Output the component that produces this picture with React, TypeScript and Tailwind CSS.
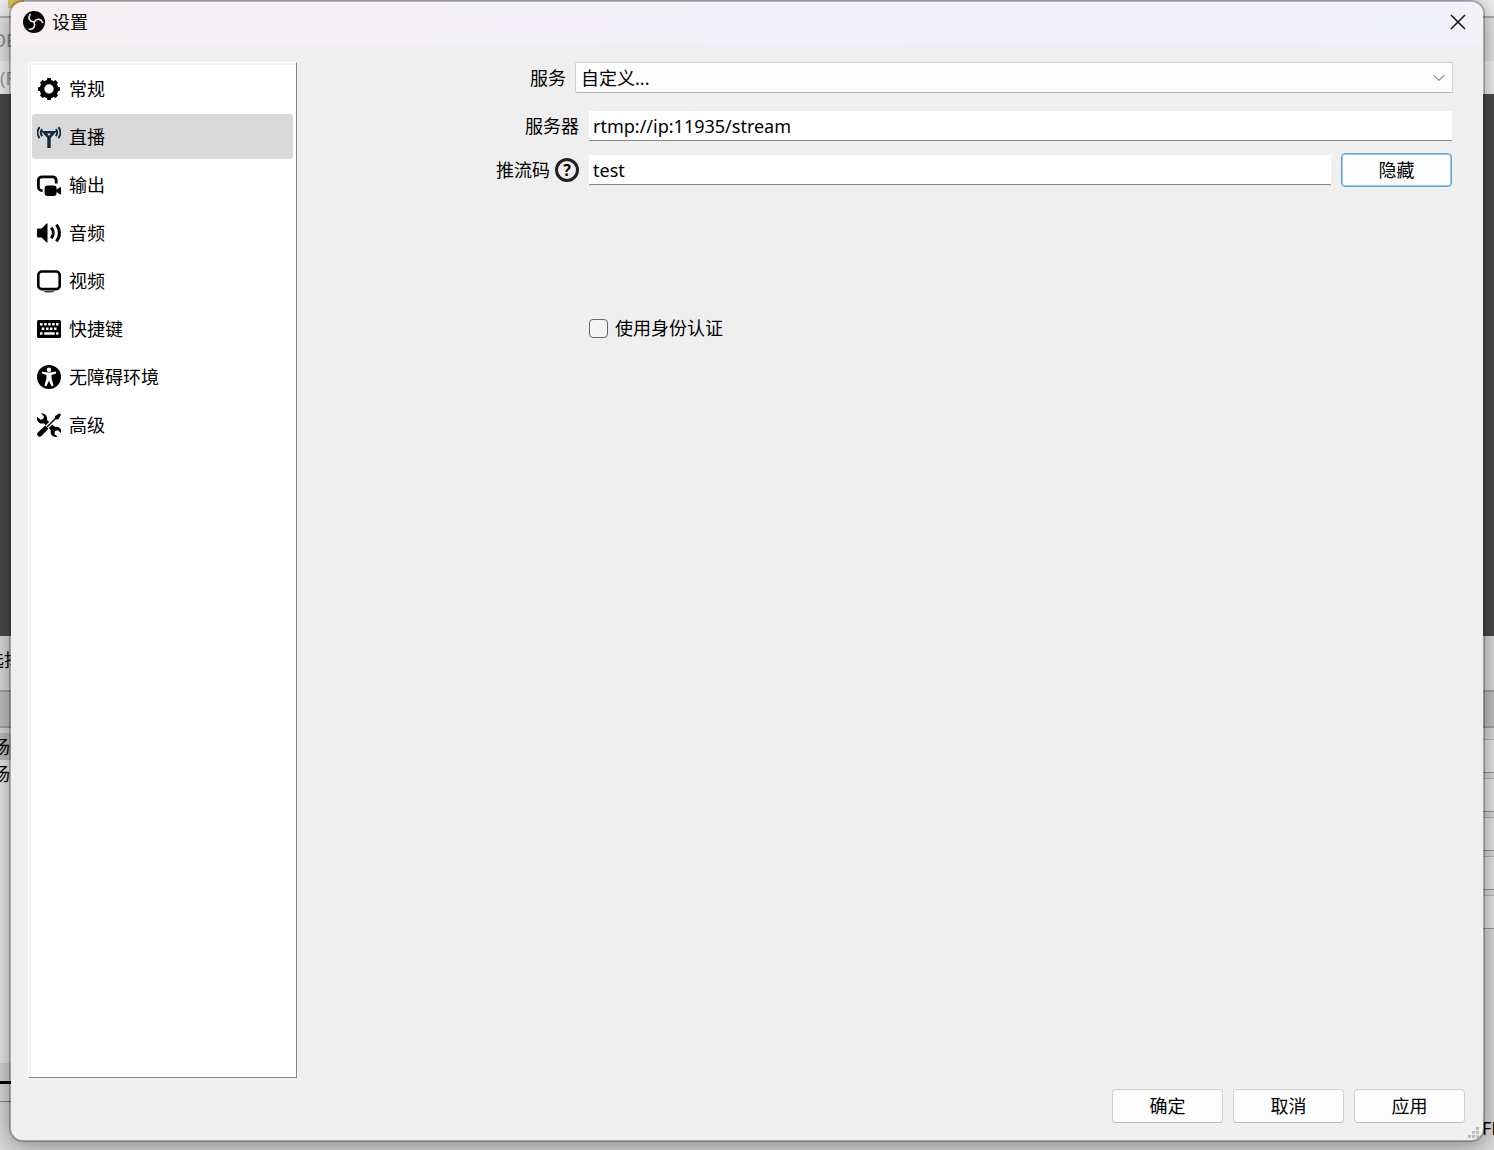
import React, { useState } from 'react';

const ObsLogo = () => (
  <svg viewBox="0 0 24 24" className="w-[22px] h-[22px]" aria-hidden="true">
    <circle cx="12" cy="12" r="12" fill="#050505" />
    <g fill="none" stroke="#f1edf2" strokeWidth="1.7" strokeLinecap="round">
      <path d="M11.600 11.800C7 11.400 5 7.600 7.800 3.600" />
      <path d="M11.600 11.800C7 11.400 5 7.600 7.800 3.600" transform="rotate(120 12 12)" />
      <path d="M11.600 11.800C7 11.400 5 7.600 7.800 3.600" transform="rotate(240 12 12)" />
    </g>
  </svg>
);

const GearIcon = () => (
  <svg viewBox="0 0 24 24" className="w-6 h-6">
    <circle cx="12" cy="12" r="7" fill="none" stroke="#000" strokeWidth="4.6" />
    {[0, 45, 90, 135, 180, 225, 270, 315].map((angle) => (
      <rect key={angle} x="9.9" y="1" width="4.200" height="4" rx="1" transform={`rotate(${angle} 12 12)`} />
    ))}
  </svg>
);

const StreamIcon = () => (
  <svg viewBox="0 0 24 24" className="w-6 h-6" fill="none" stroke="#10293c">
    <path d="M7 7.200h10l-5 5.600z" strokeWidth="2.600" />
    <path d="M12 12v11" strokeWidth="3.400" />
    <path d="M5.200 4.200c-1.600 2-1.600 5 0 7M18.800 4.200c1.600 2 1.600 5 0 7" strokeWidth="1.900" />
    <path d="M2.600 2.200c-2.500 3.200-2.500 7.800 0 11M21.400 2.200c2.500 3.200 2.500 7.800 0 11" strokeWidth="1.900" />
  </svg>
);

const OutputIcon = () => (
  <svg viewBox="0 0 24 24" className="w-6 h-6">
    <path d="M5.600 17.600H5a3.600 3.600 0 0 1-3.600-3.600V7.400A3.600 3.600 0 0 1 5 3.800h10.600a3.600 3.600 0 0 1 3.600 3.600v3.200" fill="none" stroke="#000" strokeWidth="2.800" />
    <rect x="7.600" y="12.600" width="12" height="10.400" rx="3" />
    <path d="M19 17l4-2.800q1-.5 1 .6v6q0 1.100-1 .6l-4-2.800z" />
  </svg>
);

const AudioIcon = () => (
  <svg viewBox="0 0 24 24" className="w-6 h-6">
    <path d="M1.200 7.600h3.400l5-5q.9-.7.9.6v17.600q0 1.300-.9.6l-5-5H1.200Q0 16.400 0 15.200V8.800Q0 7.600 1.200 7.600z" />
    <path d="M14.200 6.600c2.700 3.200 2.700 7.600 0 10.800M19.400 3.600c4 5 4 11.800 0 16.800" fill="none" stroke="#000" strokeWidth="3" />
  </svg>
);

const VideoIcon = () => (
  <svg viewBox="0 0 24 24" className="w-6 h-6">
    <rect x="1.300" y="2.500" width="21.400" height="17.600" rx="3.600" fill="none" stroke="#000" strokeWidth="2.600" />
    <path d="M6.300 22h11.400q-1.600 1.500-3.600 1.500H9.900q-2 0-3.600-1.500z" fill="#444" />
  </svg>
);

const KeyboardIcon = () => (
  <svg viewBox="0 0 24 24" className="w-6 h-6">
    <rect y="3" width="24" height="18" rx="1.500" />
    <path
      fill="#fff"
      d="M3 6h2.500v2.500H3zM7.200 6h2.500v2.500H7.200zM11.200 6h2.500v2.500h-2.500zM15.200 6h2.500v2.500h-2.500zM19 6h2.500v2.500H19zM4.800 10.500h2.500V13H4.800zM9 10.500h2.500V13H9zM13 10.500h2.500V13H13zM17 10.500h2.500V13H17zM3 15.200h2.500v2.500H3zM7.200 15.200h10.500v2.500H7.200zM19 15.200h2.500v2.500H19z"
    />
  </svg>
);

const AccessibilityIcon = () => (
  <svg viewBox="0 0 24 24" className="w-6 h-6">
    <circle cx="12" cy="12" r="12" />
    <circle cx="12" cy="4.800" r="2.200" fill="#fff" />
    <path fill="#fff" d="M4.800 7.200q-.3 1.300.8 1.600l3.800 1.200v3.800L7.600 20q0 1.200 1.200 1.200.7 0 1-.8l2.200-4.600 2.200 4.600q.3.800 1 .8 1.200 0 1.200-1.200l-1.800-6.200V10l3.800-1.200q1.100-.3.800-1.600-.5-.9-1.600-.5-5.600 1.500-11.200 0-1.100-.4-1.600.5z" />
  </svg>
);

const ToolsIcon = () => (
  <svg viewBox="0 0 24 24" className="w-6 h-6">
    {/* wrench */}
    <path d="M3.800.3L7 3.300 6.200 6 3.400 6.700.3 3.700Q-.8 7.800 2 9.700q2.300 1.400 4.700.6l7.200 7q-.9 3 .9 5 2.200 2.200 5.600 1.400l-3-3 .7-2.700 2.800-.8 3.200 3q.9-3.300-1.400-5.300-2-1.700-4.600-.9L10 7.100q.8-2.800-1.300-5.200Q6.600-.2 3.800.3z" />
    {/* screwdriver: white edge first, so that it crosses over the wrench */}
    <path d="M7 17L20 4" stroke="#fff" strokeWidth="4" />
    <path d="M10 14L19 5" stroke="#000" strokeWidth="1.500" />
    <path d="M22.400.2L18.200 3l-.4 2.600 1 1 2.600-.4L24 1.800z" />
    <path d="M8.200 12.600l3.200 3.200-7 7.300q-1.900 1.300-3.500-.2-1.500-1.700-.1-3.500z" />
  </svg>
);

const sections = [
  { name: '常规', icon: <GearIcon /> },
  { name: '直播', icon: <StreamIcon /> },
  { name: '输出', icon: <OutputIcon /> },
  { name: '音频', icon: <AudioIcon /> },
  { name: '视频', icon: <VideoIcon /> },
  { name: '快捷键', icon: <KeyboardIcon /> },
  { name: '无障碍环境', icon: <AccessibilityIcon /> },
  { name: '高级', icon: <ToolsIcon /> },
];

// Main window that stays visible around the edges of the dialog
const MainWindow = () => (
  <div className="absolute inset-0 flex flex-col overflow-hidden bg-[#dcdcdc]" aria-hidden="true">
    <div className="h-4 shrink-0 bg-[#f0f0f0]">
      <div className="ml-2 h-2 w-4 bg-[#dfc468]" />
    </div>
    <div className="h-[45px] shrink-0 flex items-center border-t-2 border-[#b0b0b0] bg-[#e6e6e6] text-[#8c8c8c]">
      <span className="-ml-2">OBS</span>
    </div>
    <div className="h-[33px] shrink-0 flex items-center bg-[#f4f4f4] text-[#9c9c9c]">
      <span>(F)</span>
    </div>
    <div className="h-[542px] shrink-0 bg-[#4c4c4c]" />
    <div className="h-[54px] shrink-0 flex items-start bg-[#dedede] pt-3">
      <span className="-ml-8">未选择</span>
    </div>
    <div className="h-[38px] shrink-0 border-y-2 border-[#a6a6a6] bg-[#c4c4c4]" />
    <div className="flex grow justify-between">
      <div className="flex w-10 flex-col">
        <div className="mt-[5px] h-[27px] flex items-center bg-[#c0c0c0]">
          <span className="-ml-2">场景</span>
        </div>
        <div className="h-[27px] flex items-center bg-[#ebebeb]">
          <span className="-ml-2">场景</span>
        </div>
        <div className="h-[276px] bg-[#ebebeb]" />
        <div className="h-[18px] bg-[#d8d8d8]" />
        <div className="h-[3px] bg-black" />
        <div className="h-[18px] border-b border-[#808080]" />
      </div>
      <div className="flex w-10 flex-col justify-between">
        <div className="mt-[11px] flex flex-col gap-[5px]">
          {[0, 1, 2, 3, 4].map((row) => (
            <div key={row} className="h-[34px] border-t border-b border-t-[#b8b8b8] border-b-[#989898] bg-[#e8e8e8]" />
          ))}
        </div>
        <span className="mb-[10px] ml-7">FPS</span>
      </div>
    </div>
  </div>
);

const inputClass =
  'h-[30px] min-w-0 grow border-0 border-b border-[#858585] bg-white px-1 pt-px outline-none';
const buttonClass = 'w-[111px] h-[34px] shrink-0 rounded-[4px] border bg-[#fdfdfd]';

const App: React.FC = () => {
  const [active, setActive] = useState('直播');
  const [server, setServer] = useState('rtmp://ip:11935/stream');
  const [streamKey, setStreamKey] = useState('test');
  const [useAuth, setUseAuth] = useState(false);
  const [keyVisible, setKeyVisible] = useState(true);

  return (
    <div className="relative min-h-screen flex flex-col text-[18px] leading-6 text-black font-['Noto_Sans','Noto_Sans_CJK_SC',sans-serif]">
      <MainWindow />

      <div
        role="dialog"
        aria-labelledby="dialog-title"
        className="relative mx-[9px] mb-2 flex grow flex-col overflow-hidden rounded-[14px] border-2 border-black/25 bg-[#efefef] bg-clip-padding shadow-[0_4px_24px_rgba(0,0,0,0.4)]"
      >
        <header className="h-[43px] shrink-0 flex items-center bg-gradient-to-r from-[#f6f0f4] via-[#f2f0f8] to-[#f1f1f9] pb-[3px] pl-3 pr-4">
          <ObsLogo />
          <h1 id="dialog-title" className="ml-[7px] grow">设置</h1>
          <button type="button" aria-label="关闭">
            <svg viewBox="0 0 18 18" className="w-[18px] h-[18px]" stroke="#111" strokeWidth="1.500">
              <path d="M2 2l14 14M16 2L2 16" />
            </svg>
          </button>
        </header>

        <div className="flex grow pl-[17px] pr-[30px] pt-[17px]">
          <nav className="w-[269px] shrink-0 border border-l-white border-t-white border-r-[#858585] border-b-[#858585] bg-[#efefef] pl-[2px] pt-[2px]">
            <ul className="flex h-full flex-col gap-[3px] bg-white pl-px pr-[3px] pt-px">
              {sections.map(({ name, icon }) => (
                <li key={name}>
                  <button
                    type="button"
                    onClick={() => setActive(name)}
                    className={`flex h-[45px] w-full items-center gap-2 rounded-[3px] pl-[5px] ${
                      active === name ? 'bg-[#d9d9d9]' : ''
                    }`}
                  >
                    {icon}
                    {name}
                  </button>
                </li>
              ))}
            </ul>
          </nav>

          <form className="min-w-0 grow" onSubmit={(e) => e.preventDefault()}>
            <div className="flex items-center">
              <label htmlFor="service" className="w-[269px] shrink-0 text-right">服务</label>
              <div className="relative ml-[9px] flex grow">
                <select
                  id="service"
                  className="h-[31px] w-full appearance-none rounded-[2px] border border-[#d0d0d0] border-b-[#b5b5b5] bg-[#fdfdfd] px-[5px] outline-none"
                >
                  <option>自定义...</option>
                </select>
                <svg viewBox="0 0 12 8" className="pointer-events-none absolute right-2 top-3 h-2 w-3" fill="none" stroke="#444">
                  <path d="M.8 1.200L6 6.400l5.200-5.200" />
                </svg>
              </div>
            </div>

            <div className="mt-[18px] flex items-center pr-px">
              <label htmlFor="server" className="w-[282px] shrink-0 text-right">服务器</label>
              <input
                id="server"
                className={`ml-[10px] ${inputClass}`}
                value={server}
                onChange={(e) => setServer(e.target.value)}
              />
            </div>

            <div className="mt-3 flex items-center pr-px">
              <div className="flex w-[282px] shrink-0 items-center justify-end gap-[5px]">
                <label htmlFor="stream-key">推流码</label>
                <span className="flex h-6 w-6 items-center justify-center rounded-full border-[3px] border-[#222] text-[16px] font-bold">
                  ?
                </span>
              </div>
              <input
                id="stream-key"
                type={keyVisible ? 'text' : 'password'}
                className={`ml-[10px] ${inputClass}`}
                value={streamKey}
                onChange={(e) => setStreamKey(e.target.value)}
              />
              <button
                type="button"
                onClick={() => setKeyVisible(!keyVisible)}
                className={`ml-[10px] border-[#5fa3d3] ring-1 ring-inset ring-[#9cc8e8] ${buttonClass}`}
              >
                {keyVisible ? '隐藏' : '显示'}
              </button>
            </div>

            <label className="ml-[292px] mt-[129px] flex items-center gap-[7px]">
              <input
                type="checkbox"
                checked={useAuth}
                onChange={(e) => setUseAuth(e.target.checked)}
                className="h-[19px] w-[19px] appearance-none rounded-[4px] border border-[#666] bg-[#f4f4f4] checked:bg-[#0067c0]"
              />
              使用身份认证
            </label>
          </form>
        </div>

        <footer className="flex shrink-0 justify-end gap-[10px] pb-[17px] pr-[18px] pt-[11px]">
          <button type="button" className={`border-[#d0d0d0] border-b-[#bbb] ${buttonClass}`}>确定</button>
          <button type="button" className={`border-[#d0d0d0] border-b-[#bbb] ${buttonClass}`}>取消</button>
          <button type="button" className={`border-[#d0d0d0] border-b-[#bbb] ${buttonClass}`}>应用</button>
        </footer>

        {/* resize grip */}
        <svg viewBox="0 0 11 11" className="absolute bottom-[2px] right-1 h-[11px] w-[11px]" fill="#bdbdbd">
          <path d="M8 0h3v3H8zM4 4h3v3H4zM8 4h3v3H8zM0 8h3v3H0zM4 8h3v3H4zM8 8h3v3H8z" />
        </svg>
      </div>
    </div>
  );
};

export default App;
